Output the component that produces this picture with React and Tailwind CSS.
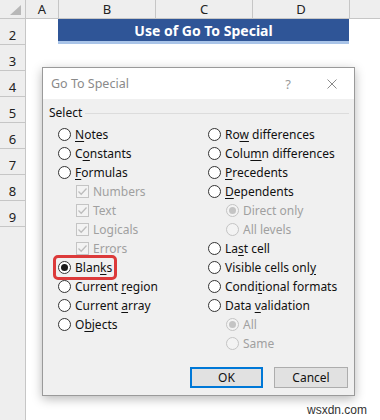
import React from "react";

function Radio({ checked, disabled }) {
  return (
    <span
      className={
        disabled
          ? "w-[13px] h-[13px] rounded-full border border-[#c4c4c4] bg-[#f3f3f3] flex items-center justify-center shrink-0"
          : "w-[13px] h-[13px] rounded-full border border-[#333333] bg-white flex items-center justify-center shrink-0"
      }
    >
      {checked && (
        <span
          className={
            disabled
              ? "w-[7px] h-[7px] rounded-full bg-[#c4c4c4]"
              : "w-[7px] h-[7px] rounded-full bg-[#1a1a1a]"
          }
        />
      )}
    </span>
  );
}

function Check() {
  return (
    <span className="w-[13px] h-[13px] border border-[#c4c4c4] bg-[#f3f3f3] flex items-center justify-center shrink-0">
      <svg width="11" height="11" viewBox="0 0 11 11">
        <polyline points="1.5,5.5 4.2,8.2 9.5,2.5" fill="none" stroke="#bdbdbd" strokeWidth="1.3" />
      </svg>
    </span>
  );
}

function Label({ t, disabled }) {
  if (typeof t === "string")
    return <span className={disabled ? "text-[#a0a0a0]" : "text-[#111]"}>{t}</span>;
  return (
    <span className={disabled ? "text-[#a0a0a0]" : "text-[#111]"}>
      {t[0]}
      <u className="underline underline-offset-[2px] decoration-[1px]">{t[1]}</u>
      {t[2]}
    </span>
  );
}

function Item({ it }) {
  if (it.kind === "check")
    return (
      <div className="h-[19px] flex items-center gap-[4px] pl-[18px]">
        <Check />
        <Label t={it.t} disabled />
      </div>
    );
  if (it.kind === "subradio")
    return (
      <div className="h-[19px] flex items-center gap-[4px] pl-[18px]">
        <Radio disabled checked={it.checked} />
        <Label t={it.t} disabled />
      </div>
    );
  return (
    <div className="relative h-[19px] flex items-center gap-[4px]">
      {it.highlight && (
        <span className="absolute left-[-5px] top-[-3px] w-[64px] h-[25px] rounded-[5px] border-[3px] border-[#dc3a3a]" />
      )}
      <Radio checked={it.checked} />
      <Label t={it.t} />
    </div>
  );
}

const left = [
  { t: ["", "N", "otes"] },
  { t: ["C", "o", "nstants"] },
  { t: ["", "F", "ormulas"] },
  { kind: "check", t: "Numbers" },
  { kind: "check", t: "Text" },
  { kind: "check", t: "Logicals" },
  { kind: "check", t: "Errors" },
  { t: ["Blan", "k", "s"], checked: true, highlight: true },
  { t: ["Current ", "r", "egion"] },
  { t: ["Current ", "a", "rray"] },
  { t: ["O", "b", "jects"] },
];

const right = [
  { t: ["Ro", "w", " differences"] },
  { t: ["Colu", "m", "n differences"] },
  { t: ["", "P", "recedents"] },
  { t: ["", "D", "ependents"] },
  { kind: "subradio", t: "Direct only", checked: true },
  { kind: "subradio", t: "All levels" },
  { t: ["La", "s", "t cell"] },
  { t: ["Visible cells onl", "y", ""] },
  { t: ["Condi", "t", "ional formats"] },
  { t: ["Data ", "v", "alidation"] },
  { kind: "subradio", t: "All", checked: true },
  { kind: "subradio", t: "Same" },
];

export default function App() {
  const rows = ["2", "3", "4", "5", "6", "7", "8", "9"];
  return (
    <div className="relative w-[380px] h-[420px] overflow-hidden bg-white font-['Noto_Sans',sans-serif] flex flex-col">
      {/* column headers */}
      <div className="flex h-[19px] border-b border-[#c6c6c6] bg-[#eeeeee] text-[13px] leading-[18px] text-[#222]">
        <div className="relative w-[26px] border-r border-[#c6c6c6]">
          <svg className="absolute left-0 top-0" width="25" height="18" viewBox="0 0 25 18">
            <polygon points="10,15 21,15 21,5" fill="#b8b8b8" />
          </svg>
        </div>
        <div className="w-[33px] border-r border-[#c6c6c6] flex justify-center">A</div>
        <div className="w-[97px] border-r border-[#c6c6c6] flex justify-center">B</div>
        <div className="w-[97px] border-r border-[#c6c6c6] flex justify-center">C</div>
        <div className="w-[97px] border-r border-[#c6c6c6] flex justify-center">D</div>
        <div className="flex-1" />
      </div>
      {/* body */}
      <div className="flex flex-1">
        <div className="w-[26px] border-r border-[#c6c6c6] bg-[#eeeeee] flex flex-col text-[13px] leading-[18px] text-[#222]">
          {rows.map((r) => (
            <div key={r} className="h-[26px] border-b border-[#c6c6c6] flex items-end justify-center">
              {r}
            </div>
          ))}
        </div>
        <div className="flex-1 bg-white">
          <div className="ml-[32px] w-[291px] h-[25px] bg-[#2f5597] border-b-[3px] border-[#a9c4e8] flex items-center justify-center text-white font-bold text-[14px]">
            Use of Go To Special
          </div>
        </div>
      </div>

      {/* dialog */}
      <div className="absolute left-[42px] top-[67px] w-[313px] h-[329px] border border-[#9a9a9a] bg-[#f0f0f0] shadow-[0_3px_10px_rgba(0,0,0,0.28)] flex flex-col text-[12px] leading-[16px]">
        <div className="h-[31px] bg-white flex items-center pl-[8px] pr-[17px] text-[#8a8a8a]">
          <span className="text-[12.5px]">Go To Special</span>
          <span className="ml-auto text-[13px] text-[#9a9a9a]">?</span>
          <svg className="ml-[36px]" width="10" height="10" viewBox="0 0 10 10">
            <path d="M0.5 0.5 L9.5 9.5 M9.5 0.5 L0.5 9.5" stroke="#8a8a8a" strokeWidth="1" />
          </svg>
        </div>
        <div className="flex items-center gap-[3px] pl-[6px] pr-[5px] pt-[6px] text-[#111]">
          <span>Select</span>
          <span className="flex-1 h-px bg-[#dcdcdc]" />
        </div>
        <div className="flex mt-[4px]">
          <div className="w-[165px] pl-[15px] flex flex-col">
            {left.map((it, i) => (
              <Item key={i} it={it} />
            ))}
          </div>
          <div className="flex-1 flex flex-col">
            {right.map((it, i) => (
              <Item key={i} it={it} />
            ))}
          </div>
        </div>
        <div className="flex justify-end gap-[11px] pr-[6px] mt-[14px]">
          <div className="w-[73px] h-[21px] border-2 border-[#0078d7] bg-[#e1e1e1] flex items-center justify-center text-[#111]">
            OK
          </div>
          <div className="w-[74px] h-[21px] border border-[#adadad] bg-[#e1e1e1] flex items-center justify-center text-[#111]">
            Cancel
          </div>
        </div>
      </div>

      <div className="absolute left-[307px] top-[402px] text-[12px] leading-[16px] text-[#333] font-['Liberation_Sans',sans-serif]">
        wsxdn.com
      </div>
    </div>
  );
}
